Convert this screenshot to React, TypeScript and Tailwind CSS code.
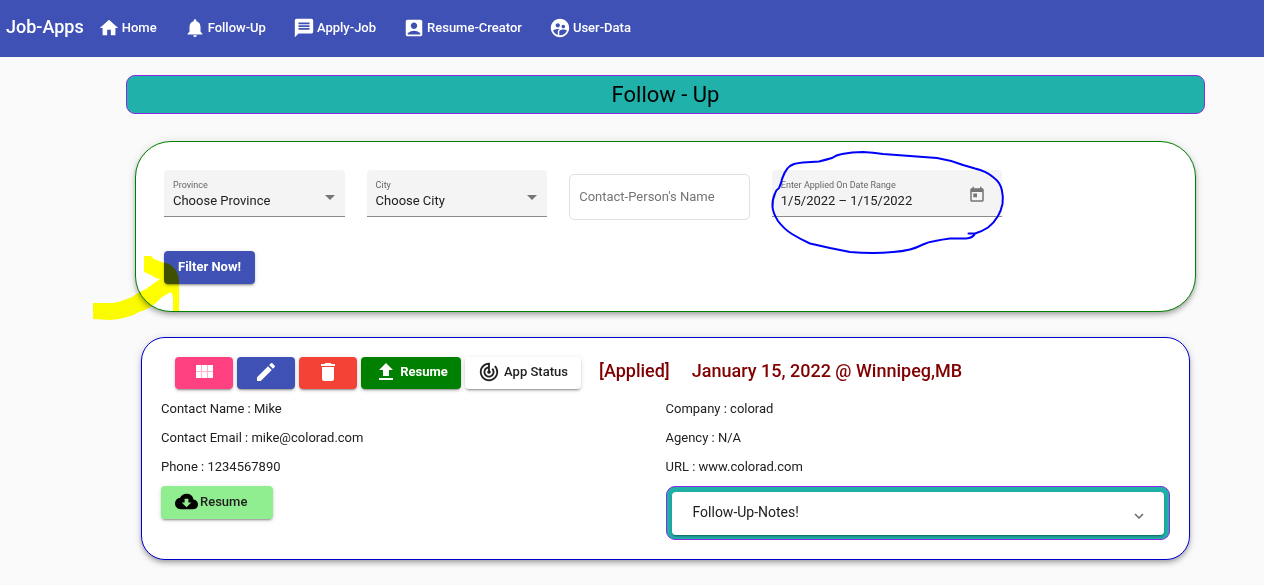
import React from "react";
import {
  MdAccountBox,
  MdCloudDownload,
  MdDelete,
  MdEdit,
  MdExpandMore,
  MdHome,
  MdMessage,
  MdNotifications,
  MdSupervisedUserCircle,
  MdTrackChanges,
} from "react-icons/md";

const navItems = [
  { label: "Home", icon: <MdHome size={22} /> },
  { label: "Follow-Up", icon: <MdNotifications size={22} /> },
  { label: "Apply-Job", icon: <MdMessage size={22} /> },
  { label: "Resume-Creator", icon: <MdAccountBox size={22} /> },
  { label: "User-Data", icon: <MdSupervisedUserCircle size={22} /> },
];

const cardShadow =
  "shadow-[0_2px_4px_-1px_rgba(0,0,0,0.2),0_4px_5px_0_rgba(0,0,0,0.14),0_1px_10px_0_rgba(0,0,0,0.12)]";
const buttonShadow =
  "shadow-[0_3px_1px_-2px_rgba(0,0,0,0.2),0_2px_2px_0_rgba(0,0,0,0.14),0_1px_5px_0_rgba(0,0,0,0.12)]";

function SelectField({ id, label, value }: { id: string; label: string; value: string }) {
  return (
    <div className="relative mr-[22px] h-[47px] rounded-t border-b border-[#8a8a8a] bg-[#f4f4f4] px-[9px] pt-[9px]">
      <label htmlFor={id} className="block text-[9px] leading-[13px] text-[#666]">
        {label}
      </label>
      <select
        id={id}
        className="block w-full appearance-none bg-transparent text-[13px] leading-[18px] text-[#212121] outline-none"
      >
        <option>{value}</option>
      </select>
      <svg className="pointer-events-none absolute right-[10px] top-[25px]" width="10" height="5" aria-hidden="true">
        <path d="M0 0h10L5 5z" fill="#757575" />
      </svg>
    </div>
  );
}

function GridIcon() {
  return (
    <svg width="24" height="24" viewBox="0 0 24 24" fill="currentColor" aria-hidden="true">
      <path opacity="0.6" d="M4 5h17v13H4z" />
      <path d="M4 11h5V5H4v6zm0 7h5v-6H4v6zm6 0h5v-6h-5v6zm6 0h5v-6h-5v6zm-6-7h5V5h-5v6zm6-6v6h5V5h-5z" />
    </svg>
  );
}

function UploadIcon() {
  return (
    <svg width="24" height="24" viewBox="0 0 24 24" fill="currentColor" aria-hidden="true">
      <path d="M9 16h6v-6h4l-7-7-7 7h4zm-4 2h14v2H5z" />
    </svg>
  );
}

function FilterCard() {
  return (
    <section
      className={`relative mx-[9px] mt-[27px] rounded-[36px] border border-[#008000] bg-white pb-[27px] pl-7 pr-[18px] pt-7 ${cardShadow}`}
    >
      <div className="grid grid-cols-5">
        <SelectField id="province" label="Province" value="Choose Province" />
        <SelectField id="city" label="City" value="Choose City" />
        <input
          type="text"
          aria-label="Contact-Person's Name"
          placeholder="Contact-Person's Name"
          className="mr-[22px] mt-1 h-[46px] rounded-[5px] border border-[#e0e0e0] bg-white px-[9px] pb-[2px] text-[13px] text-[#212121] outline-none placeholder:text-[#757575]"
        />
        <div className="relative col-span-2 flex h-[47px] w-[230px] items-start justify-between rounded-t border-b border-[#8a8a8a] bg-[#f4f4f4] pl-[9px] pr-4 pt-[9px]">
          <div className="w-40">
            <label htmlFor="range" className="block text-[9px] leading-[13px] text-[#666]">
              Enter Applied On Date Range
            </label>
            <input
              id="range"
              type="text"
              defaultValue="1/5/2022 – 1/15/2022"
              className="block h-[18px] w-full bg-transparent text-[13px] leading-[18px] text-[#212121] outline-none"
            />
          </div>
          <button type="button" aria-label="Open calendar" className="mt-[7px] text-[#757575]">
            <svg width="18" height="18" viewBox="0 0 24 24" fill="currentColor" aria-hidden="true">
              <path d="M19 3h-1V1h-2v2H8V1H6v2H5c-1.11 0-1.99.9-1.99 2L3 19c0 1.1.89 2 2 2h14c1.1 0 2-.9 2-2V5c0-1.1-.9-2-2-2zm0 16H5V8h14v11zM7 10h5v5H7z" />
            </svg>
          </button>
          <svg
            className="pointer-events-none absolute -left-[2px] -top-5"
            width="236"
            height="106"
            fill="none"
            stroke="#0000fa"
            strokeWidth="2"
            strokeLinecap="round"
            strokeLinejoin="round"
            aria-hidden="true"
          >
            <path d="M198.500 83.500L205 83.500Q203 88 196 88.500L180 88.500Q172 89.500 165 91Q158 92 153 94.500Q146 98 140 99.500Q132 101.500 123 102Q113 103 103 103Q91 103 80 102Q70 100 60 98L40 93.500Q31 89.500 22 84Q14 79 8 71Q3 63 2.500 57Q2 50 5 43.500Q6 40 9 38Q11 34 12 29L14.500 23Q17 18 20 16L24 14Q28 13 33 12.500L49 11.500Q55 10 62 8Q66 5 72 4Q82 2 93 2Q103 2.500 113 4Q140 6 167 8Q180 10 193 15L205 18.500Q216 21 223 27Q231 33 232 41Q233.500 47 232.500 54Q231 61 228 66Q224 73 218 77.500Q212 81.500 205 83.500" />
          </svg>
        </div>
      </div>
      <button
        type="button"
        className={`mt-[31px] block h-[33px] rounded bg-[#3f51b5] px-[14px] pb-[2px] text-[13px] font-bold text-white ${buttonShadow}`}
      >
        Filter Now!
      </button>
      <svg
        className="pointer-events-none absolute -left-[43px] top-[113px] mix-blend-multiply"
        width="87"
        height="66"
        aria-hidden="true"
      >
        <path
          d="M0 48H20Q27 47 34 44Q40 42 45 38Q54 34 60 29L67 24Q62 23 58 20L51 17V1H58L61 4L71 8Q76 8 79 11Q85 16 86 25V56H80V42L78 37L74 39Q68 42 63 48Q54 55 46 57Q40 61 34 62Q25 65 17 65L0 64Z"
          fill="#ffff00"
        />
      </svg>
    </section>
  );
}

function ApplicationCard() {
  const actionBase = "flex h-8 items-center justify-center rounded pb-[2px] text-[13px]";
  return (
    <section
      className={`mx-[15px] mt-[25px] rounded-[24px] border border-[#0000cd] bg-white p-[19px] ${cardShadow}`}
    >
      <div className="flex items-center gap-1 pl-[14px]">
        <button type="button" aria-label="View" className={`${actionBase} ${buttonShadow} w-[58px] bg-[#ff4081] text-white`}>
          <GridIcon />
        </button>
        <button type="button" aria-label="Edit" className={`${actionBase} ${buttonShadow} w-[58px] bg-[#3f51b5] text-white`}>
          <MdEdit size={24} />
        </button>
        <button type="button" aria-label="Delete" className={`${actionBase} ${buttonShadow} w-[58px] bg-[#f44336] text-white`}>
          <MdDelete size={24} />
        </button>
        <button type="button" className={`${actionBase} ${buttonShadow} w-[100px] gap-[2px] bg-[#008000] font-bold text-white`}>
          <UploadIcon />
          Resume
        </button>
        <button type="button" className={`${actionBase} ${buttonShadow} w-[116px] gap-1 bg-white font-medium text-[#212121]`}>
          <MdTrackChanges size={22} />
          App Status
        </button>
        <h2 className="ml-[14px] flex gap-[22px] whitespace-nowrap pb-1 text-[18px] font-medium leading-6 text-[#800000]">
          <span>[Applied]</span>
          <span>January 15, 2022 @ Winnipeg,MB</span>
        </h2>
      </div>
      <div className="mt-[5px] grid grid-cols-2 text-[13px] leading-[29px] text-[#212121]">
        <div>
          <p>Contact Name : Mike</p>
          <p>Contact Email : mike@colorad.com</p>
          <p>Phone : 1234567890</p>
          <button
            type="button"
            className={`mt-[5px] flex h-[33px] w-28 items-center gap-[2px] rounded bg-[#90ee90] pb-[2px] pl-[14px] text-[13px] font-medium ${buttonShadow}`}
          >
            <MdCloudDownload size={23} className="text-black" />
            Resume
          </button>
        </div>
        <div>
          <p>Company : colorad</p>
          <p>Agency : N/A</p>
          <p>URL : www.colorad.com</p>
          <div className="mt-[5px] rounded-[9px] border border-[#8a2be2] bg-[#20b2aa] px-[5px] pb-1 pt-[5px]">
            <button
              type="button"
              aria-expanded="false"
              className={`flex h-[43px] w-full items-center justify-between rounded bg-white pb-[2px] pl-[21px] pr-4 text-[14px] ${buttonShadow}`}
            >
              Follow-Up-Notes!
              <MdExpandMore size={18} className="mt-[6px] text-[#666]" />
            </button>
          </div>
        </div>
      </div>
    </section>
  );
}

export default function App() {
  return (
    <div className="min-h-screen bg-[#fafafa] font-['Roboto',sans-serif] text-black">
      <header className="flex h-[57px] items-center bg-[#3f51b5] pb-[3px] pl-[6px] text-white">
        <span className="mr-[14px] text-[18px] font-medium leading-6">Job-Apps</span>
        <nav className="flex items-center gap-[27px] pt-px">
          {navItems.map((item) => (
            <a
              key={item.label}
              href="#"
              className="flex items-center gap-[2px] whitespace-nowrap text-[13px] font-medium"
            >
              {item.icon}
              {item.label}
            </a>
          ))}
        </nav>
      </header>
      <main className="pb-6 pl-[126px] pr-[59px] pt-[18px]">
        <h1 className="flex h-[39px] items-center justify-center rounded-[9px] border border-[#8a2be2] bg-[#20b2aa] text-[22px]">
          Follow - Up
        </h1>
        <FilterCard />
        <ApplicationCard />
      </main>
    </div>
  );
}
